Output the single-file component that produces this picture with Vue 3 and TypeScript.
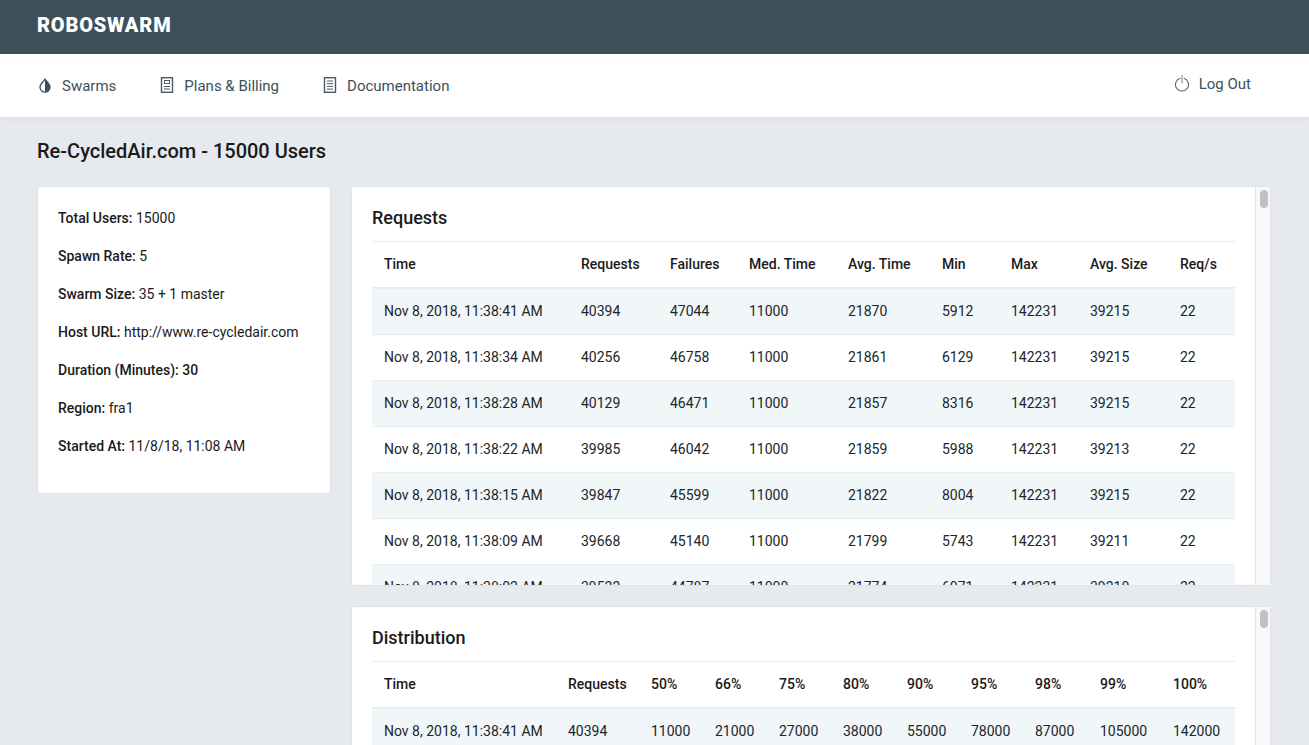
<script setup lang="ts">
const info: [string, string][] = [
  ['Total Users:', '15000'],
  ['Spawn Rate:', '5'],
  ['Swarm Size:', '35 + 1 master'],
  ['Host URL:', 'http://www.re-cycledair.com'],
  ['Duration (Minutes): 30', ''],
  ['Region:', 'fra1'],
  ['Started At:', '11/8/18, 11:08 AM'],
]
const reqHead = ['Time', 'Requests', 'Failures', 'Med. Time', 'Avg. Time', 'Min', 'Max', 'Avg. Size', 'Req/s']
const reqRows = [
  ['Nov 8, 2018, 11:38:41 AM', '40394', '47044', '11000', '21870', '5912', '142231', '39215', '22'],
  ['Nov 8, 2018, 11:38:34 AM', '40256', '46758', '11000', '21861', '6129', '142231', '39215', '22'],
  ['Nov 8, 2018, 11:38:28 AM', '40129', '46471', '11000', '21857', '8316', '142231', '39215', '22'],
  ['Nov 8, 2018, 11:38:22 AM', '39985', '46042', '11000', '21859', '5988', '142231', '39213', '22'],
  ['Nov 8, 2018, 11:38:15 AM', '39847', '45599', '11000', '21822', '8004', '142231', '39215', '22'],
  ['Nov 8, 2018, 11:38:09 AM', '39668', '45140', '11000', '21799', '5743', '142231', '39211', '22'],
  ['Nov 8, 2018, 11:38:02 AM', '39522', '44787', '11000', '21774', '6071', '142231', '39210', '22'],
]
const distHead = ['Time', 'Requests', '50%', '66%', '75%', '80%', '90%', '95%', '98%', '99%', '100%']
const distRows = [
  ['Nov 8, 2018, 11:38:41 AM', '40394', '11000', '21000', '27000', '38000', '55000', '78000', '87000', '105000', '142000'],
]
const panels = [
  { title: 'Requests', head: reqHead, rows: reqRows, cols: [197, 89, 79, 99, 94, 69, 79, 90, 67] },
  { title: 'Distribution', head: distHead, rows: distRows, cols: [184, 83, 64, 64, 64, 64, 64, 64, 65, 73, 74] },
]
</script>

<template>
  <div class="page">
    <header class="topbar"><span class="brand">ROBOSWARM</span></header>
    <nav class="nav">
      <a class="link">
        <svg class="icon" width="14" height="16" viewBox="0 0 14 16"><path d="M7 2.200C5.200 4.800 2 7 2 10.200a5 5 0 0 0 10 0C12 7 8.800 4.800 7 2.200z" fill="none" stroke="#3d4f5b" stroke-width="1.300"/><path d="M7 2.200C8.800 4.800 12 7 12 10.200a5 5 0 0 1-5 5z" fill="#3d4f5b"/></svg>
        Swarms
      </a>
      <a class="link">
        <svg class="icon" width="14" height="16" viewBox="0 0 14 16" fill="none" stroke="#4a5a66"><rect x="1.500" y="0.700" width="11" height="14.600" stroke-width="1.400"/><rect x="4.500" y="3.500" width="5" height="3" stroke-width="1"/><path d="M4 9.500h6M4 12h6"/></svg>
        Plans &amp; Billing
      </a>
      <a class="link">
        <svg class="icon" width="14" height="16" viewBox="0 0 14 16" fill="none" stroke="#4a5a66"><rect x="1.500" y="0.700" width="11" height="14.600" stroke-width="1.400"/><path d="M4 4h6M4 6.700h6M4 9.400h6M4 12.100h6"/></svg>
        Documentation
      </a>
      <a class="link logout">
        <svg class="icon" width="14" height="17" viewBox="0 0 14 17" fill="none"><path d="M5.300 3.300a6.500 6.500 0 1 0 3.400 0" stroke="#566570" stroke-width="1.100"/><path d="M7 0v8.500" stroke="#8f9ba3" stroke-width="1.200"/></svg>
        Log Out
      </a>
    </nav>
    <main class="content">
      <h1 class="title">Re-CycledAir.com - 15000 Users</h1>
      <div class="columns">
        <aside class="info card">
          <p v-for="item in info" :key="item[0]"><b>{{ item[0] }}</b> {{ item[1] }}</p>
        </aside>
        <div class="panels">
          <section v-for="p in panels" :key="p.title" class="panel card">
            <h2>{{ p.title }}</h2>
            <table>
              <colgroup><col v-for="(w, i) in p.cols" :key="i" :style="{ width: w + 'px' }" /></colgroup>
              <thead><tr><th v-for="h in p.head" :key="h">{{ h }}</th></tr></thead>
              <tbody>
                <tr v-for="r in p.rows" :key="r[0]"><td v-for="(c, i) in r" :key="i">{{ c }}</td></tr>
              </tbody>
            </table>
            <div class="scrollbar"><div class="thumb"></div></div>
          </section>
        </div>
      </div>
    </main>
  </div>
</template>

<style>
html, body { margin: 0; overflow: hidden; height: 745px; }
</style>

<style scoped>
.page { height: 745px; overflow: hidden; background: #e6e9ee; font-family: Roboto, sans-serif; font-size: 14px; line-height: 21px; color: #1a1a1a; }
.topbar { height: 54px; background: #3d4f5b; padding: 0 37px; display: flex; align-items: center; }
.brand { color: #fff; font-weight: 900; font-size: 20px; position: relative; top: -2px; letter-spacing: 0.8px; }
.nav { height: 63px; background: #fff; padding: 2px 58px 0 38px; display: flex; align-items: center; gap: 44px; box-shadow: 0 2px 6px rgba(0,0,0,.05); position: relative; box-sizing: border-box; }
.link { display: flex; align-items: center; gap: 10px; font-size: 15px; color: #3d4f5b; }
.link .icon { flex: none; margin-top: -3px; }
.logout { margin-left: auto; position: relative; top: -2px; }
.logout .icon { margin-top: -2px; }
.content { padding: 0 38px 0 37px; }
.title { margin: 0; padding: 23px 0 23px; font-size: 20px; line-height: 23px; font-weight: 500; }
.columns { display: flex; gap: 20px; align-items: flex-start; }
.card { background: #fff; border: 1px solid #dfe2e6; border-radius: 3px; box-sizing: border-box; }
.info { width: 294px; flex: none; padding: 21px 20px 19px; }
.info p { margin: 0 0 17px; }
.info b { font-weight: 500; }
.panels { flex: 1; min-width: 0; display: flex; flex-direction: column; gap: 20px; }
.panel { height: 400px; overflow: hidden; padding: 20px 35px 0 20px; position: relative; }
.scrollbar { position: absolute; top: 0; right: 0; bottom: 0; width: 15px; box-sizing: border-box; background: #f8f8f8; border-left: 1px solid #e6e6e6; }
.thumb { position: absolute; top: 3px; left: 4px; width: 8px; height: 18px; border-radius: 4px; background: #c1c1c1; }
h2 { margin: 0; font-size: 18px; line-height: 21px; font-weight: 500; padding-bottom: 13px; border-bottom: 1px solid #e9ecef; }
table { width: 100%; border-collapse: collapse; table-layout: fixed; }
th { text-align: left; font-weight: 500; padding: 12px; border-bottom: 2px solid #e9ecef; white-space: nowrap; }
td { padding: 12px; border-bottom: 1px solid #e9ecef; color: #212529; white-space: nowrap; }
tbody tr:nth-child(odd) { background: #f1f6f9; }
</style>
